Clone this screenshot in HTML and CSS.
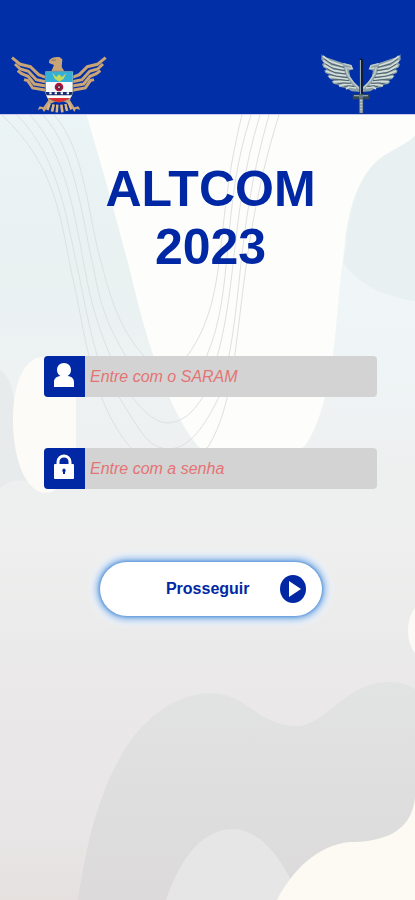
FILE: index.html
```html
<!DOCTYPE html>
<html lang="pt-BR">
<head>
<meta charset="utf-8">
<meta name="viewport" content="width=device-width, initial-scale=1">
<title>ALTCOM 2023</title>
<link rel="stylesheet" href="styles.css">
</head>
<body>
<svg class="backdrop" viewBox="0 0 415 900" preserveAspectRatio="none" aria-hidden="true">
  <defs>
    <linearGradient id="base" x1="0" y1="0" x2="0" y2="1">
      <stop offset="0.12" stop-color="#ebf4f6"/>
      <stop offset="0.3" stop-color="#e9f1f1"/>
      <stop offset="0.42" stop-color="#eef2f3"/>
      <stop offset="0.6" stop-color="#eeefee"/>
      <stop offset="0.78" stop-color="#eae8e9"/>
      <stop offset="0.92" stop-color="#e8e6e7"/>
      <stop offset="1" stop-color="#e6e1df"/>
    </linearGradient>
    <linearGradient id="side" x1="0" y1="0" x2="0" y2="1">
      <stop offset="0.3" stop-color="#f0f6f8"/>
      <stop offset="1" stop-color="#f0f6f8" stop-opacity="0"/>
    </linearGradient>
    <linearGradient id="hill" x1="0" y1="0" x2="0" y2="1">
      <stop offset="0" stop-color="#e2e3e3"/>
      <stop offset="1" stop-color="#dcdadb"/>
    </linearGradient>
  </defs>
  <rect width="415" height="900" fill="url(#base)"/>
  <path d="M415 240H300V448H415Z" fill="url(#side)"/>
  <path d="M0 370C8 375 12 385 14 400L40 486Q15 474 0 488Z" fill="#e8ebec"/>
  <path d="M85 110C103 170 116 218 129 267C143 326 153 360 172 403C183 426 190 437 200 448Q250 485 305 446C318 427 325 400 330 375C337 335 338 290 343 260C347 220 352 188 374 164C388 150 404 147 415 136V110Z" fill="#fdfdfb"/>
  <path d="M415 136C404 147 388 150 374 164C356 183 350 220 343 263C360 286 386 297 415 301Z" fill="#e9f0f1"/>
  <path d="M44 357C22 357 13 387 13 420C13 460 26 492 45 493Q70 491 76 448V400Q74 360 44 357Z" fill="#fcfbf7"/>
  <g fill="none" stroke="#dee1e1" stroke-width="1">
    <path d="M2 115C55 165 60 215 72 275C84 325 90 400 130 447Q165 483 208 447C247 385 230 270 279 115"/>
    <path d="M17 115C62 160 68 230 79 275C91 335 98 375 119 397C145 440 150 447 168 449C190 449 205 425 219 397C245 310 233 240 269 115"/>
    <path d="M30 115C68 155 76 225 86 275C95 325 110 355 121 380Q147 423 168 423Q187 423 203 397C241 310 226 225 260 115"/>
    <path d="M43 115C76 150 82 220 94 270C102 318 116 338 125 355Q168 420 207 355C235 290 220 210 251 115"/>
    <path d="M54 115C86 150 88 220 102 265C114 315 128 338 143 355Q164 374 188 355C230 295 213 230 242 115"/>
  </g>
  <path d="M415 608Q408 617 408 630Q408 645 415 653Z" fill="#fbfaf7"/>
  <path d="M78 900C87 840 99 792 125 749C146 716 177 693 213 693C248 695 258 726 298 726C328 724 345 682 390 682Q404 682 415 689V900Z" fill="url(#hill)"/>
  <path d="M166 900Q190 830 233 829Q266 830 292 882L277 900Z" fill="#e7e6e7"/>
  <path d="M277 900C292 871 317 845 350 842C382 842 411 833 415 798V900Z" fill="#fdf9f3"/>
</svg>

<header class="topbar">
  <svg class="eagle" viewBox="33 48 288 171" role="img" aria-label="Águia com escudo">
    <g fill="none" stroke="#c9a477" stroke-width="9" stroke-linejoin="miter">
      <path d="M36 53L61 73L91 80L116 104L137 112"/>
      <path d="M45 72L61 87L85 94L109 119L137 125"/>
      <path d="M53 92L65 101L84 109L103 132L139 138"/>
      <path d="M72 119L83 122L98 144L139 151"/>
      <path d="M317 53L292 73L262 80L238 104L217 112"/>
      <path d="M309 72L293 87L269 94L246 119L217 125"/>
      <path d="M301 92L289 101L270 109L251 132L217 138"/>
      <path d="M282 119L271 122L256 144L217 151"/>
    </g>
    <path d="M148 60Q158 49 178 51L187 58L185 81L193 94H154L162 75L147 69Z" fill="#c9a477"/>
    <path d="M154 61L168 60" stroke="#705b51" stroke-width="2"/>
    <path d="M133 151L145 181L130 202L119 199L113 209L126 206L132 216L150 191L170 184H188L208 191L223 216L228 206L241 209L235 199L223 202L210 181L219 151Z" fill="#c9a477"/>
    <path d="M149 190L142 210M161 193L156 215M172 194L170 217M184 194L187 217M196 192L201 213M205 188L214 208" stroke="#d9b586" stroke-width="8"/>
    <path d="M155 192L150 211M167 194L164 215M178 194V216M191 193L195 214M202 191L208 208" stroke="#172d75" stroke-width="3"/>
    <path d="M136 94H219V157Q217 179 177 187Q138 179 136 157Z" fill="#f6f8f9" stroke="#4d5c68" stroke-width="2"/>
    <path d="M137 95H218V126H137Z" fill="#36afd7"/>
    <path d="M137 156H218Q216 167 208 173H147Q138 167 137 156Z" fill="#182c70"/>
    <path d="M139 166H216L211 174H143Z" fill="#fff"/>
    <path d="M146 174H209Q195 184 177 187Q158 184 146 174Z" fill="#dd2e34"/>
    <path d="M157 99L169 111L177 103L186 111L199 99L191 116L178 125L164 116Z" fill="#c5d95a"/>
    <circle cx="177" cy="141" r="13" fill="#b3143c"/>
    <path d="M177 131L181 138L188 140L182 145L184 151L177 148L170 151L172 145L166 140L174 138Z" fill="#532844"/>
    <circle cx="177" cy="142" r="3" fill="#f3b8c2"/>
    <path d="M148 160H155M164 160H171M182 160H189M200 160H207" stroke="#fff" stroke-width="6"/>
  </svg>
  <svg class="wings" viewBox="33 39 240 183" role="img" aria-label="Espada alada">
    <defs>
      <g id="wing">
        <path d="M35 41Q37 51 55 54L101 70L124 76L128 88L117 92L121 111L134 128L151 143V156L125 154L110 145L91 141L84 134L72 132L65 125L72 119L61 118L52 108L59 104L46 99L43 91L51 88L40 82L36 72L42 69L34 59Z" fill="#8fa1a8"/>
        <path d="M39 48L58 63L99 77M40 62L62 78L101 87M43 76L68 91L104 97M48 93L74 103L108 107M57 110L81 113L114 118M70 126L91 124L120 126M87 138L104 133L127 135M108 147L119 140L138 144" fill="none" stroke="#d5dedb" stroke-width="5"/>
        <path d="M43 57L65 72L102 82M47 72L70 86L105 92M50 86L75 98L108 102M57 102L80 109L113 113M69 119L90 119L117 122M82 132L99 129L122 130M102 141L115 137L134 140" fill="none" stroke="#4c636a" stroke-width="3"/>
        <path d="M100 71L123 77L127 86L112 84M107 81L112 101L127 124L147 146" fill="none" stroke="#c3cfcd" stroke-width="4"/>
      </g>
    </defs>
    <use href="#wing"/>
    <use href="#wing" transform="translate(306 0) scale(-1 1)"/>
    <path d="M148 59L153 54L159 59V164H148Z" fill="#101e36"/>
    <path d="M151 60V163" stroke="#b4c5ce" stroke-width="3"/>
    <path d="M128 163H179V178H128Z" fill="#344752"/>
    <path d="M132 167H174" stroke="#91a3a5" stroke-width="4"/>
    <circle cx="153" cy="170" r="7" fill="#647b86"/>
    <path d="M148 177H159V219H148Z" fill="#b9c4c6" stroke="#40505e" stroke-width="2"/>
    <path d="M148 186H159M148 195H159M148 204H159M148 213H159" stroke="#546772" stroke-width="2"/>
  </svg>
</header>

<main class="login">
  <h1 class="title">ALTCOM<br>2023</h1>
  <form class="form">
    <div class="field">
      <label class="field-icon" for="saram" aria-label="SARAM">
        <svg viewBox="0 0 22 26" aria-hidden="true"><path d="M11 1C6.700 1 4 4 4 8C4 11 5.500 13 7.500 14C3 14.500 1 17 1 20V25H21V20C21 17 19 14.500 14.500 14C16.500 13 18 11 18 8C18 4 15.300 1 11 1Z" fill="#fff"/></svg>
      </label>
      <input class="field-input" id="saram" type="text" placeholder="Entre com o SARAM">
    </div>
    <div class="field">
      <label class="field-icon" for="senha" aria-label="Senha">
        <svg viewBox="0 0 22 26" aria-hidden="true"><path d="M5 12V8C5 0 17 0 17 8V12" fill="none" stroke="#fff" stroke-width="3"/><rect x="1" y="10" width="20" height="15" rx="1" fill="#fff"/><path d="M11 14.500A2 2 0 0 1 12 18V20H10V18A2 2 0 0 1 11 14.500Z" fill="#0028a5"/></svg>
      </label>
      <input class="field-input" id="senha" type="password" placeholder="Entre com a senha">
    </div>
    <button class="submit" type="submit">
      <span>Prosseguir</span>
      <svg class="play" viewBox="0 0 26 28" aria-hidden="true"><ellipse cx="13" cy="14" rx="13" ry="14" fill="#0028a5"/><path d="M9 6L21 14L9 22Z" fill="#fff"/></svg>
    </button>
  </form>
</main>
</body>
</html>
```

FILE: styles.css
```css
* {
  box-sizing: border-box;
}

body {
  position: relative;
  margin: 0;
  min-height: 100vh;
  overflow-x: hidden;
  font-family: "Liberation Sans", Arial, sans-serif;
  color: #0028a5;
}

.backdrop {
  position: absolute;
  inset: 0;
  z-index: -1;
  width: 100%;
  height: 100%;
}

.topbar {
  display: flex;
  align-items: flex-end;
  justify-content: space-between;
  height: 115px;
  padding: 0 14px 0 11px;
  background: #002fa7;
  border-bottom: 1px solid #c9c9ee;
}

.eagle {
  width: 96px;
  height: 57px;
  margin-bottom: 1px;
}

.wings {
  width: 80px;
  height: 61px;
}

.login {
  padding: 45px 38px 48px 44px;
}

.title {
  margin: 0;
  font-size: 50px;
  line-height: 58px;
  text-align: center;
}

.form {
  display: flex;
  flex-direction: column;
  margin-top: 80px;
}

.field {
  display: flex;
  height: 41px;
  margin-bottom: 51px;
  border-radius: 4px;
  overflow: hidden;
  background: #d3d3d3;
}

.field-icon {
  display: flex;
  flex: none;
  justify-content: center;
  width: 41px;
  padding: 6px 2px 0 0;
  background: #0028a5;
}

.field-icon svg {
  width: 22px;
  height: 26px;
}

.field-input {
  flex: 1;
  min-width: 0;
  padding: 0 5px;
  border: 0;
  background: transparent;
  font: italic 16px "Liberation Sans", Arial, sans-serif;
  color: #0028a5;
}

.field-input::placeholder {
  color: #e47474;
  opacity: 1;
}

.submit {
  display: flex;
  align-items: center;
  justify-content: flex-end;
  gap: 30px;
  align-self: center;
  width: 222px;
  height: 54px;
  margin-top: 22px;
  padding: 0 16px;
  border: 0;
  border-radius: 27px;
  background: #fff;
  box-shadow: 0 0 3px 1px #5c97d9, 0 0 7px 4px #8db8e8, 0 0 4px 10px #f1f4f8;
  font: bold 16px "Liberation Sans", Arial, sans-serif;
  color: #0028a5;
}

.play {
  width: 26px;
  height: 28px;
}
```
